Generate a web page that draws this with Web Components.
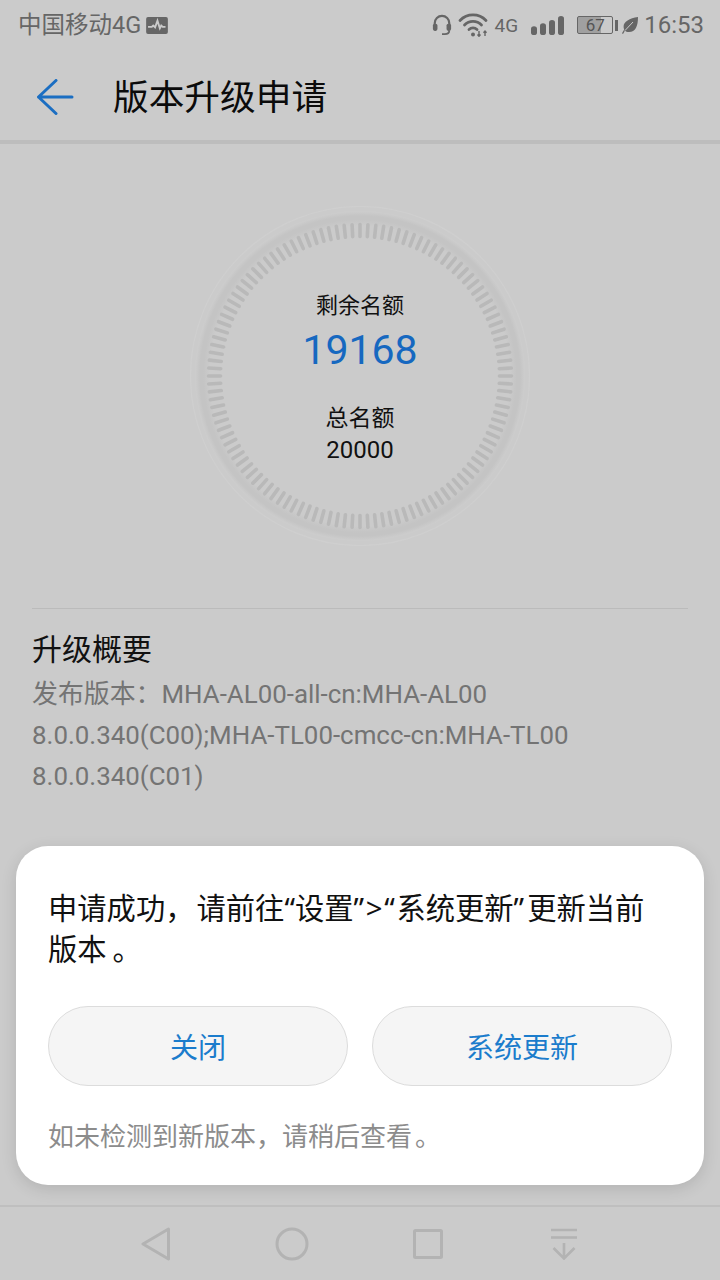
<!DOCTYPE html>
<html lang="zh-CN"><head><meta charset="utf-8"><title>版本升级申请</title>
<style>
html,body{margin:0;padding:0;width:720px;height:1280px;overflow:hidden;background:#cbcbcb;font-family:Roboto,"Noto Sans CJK SC",sans-serif}
body{position:relative;display:flex;flex-direction:column}
</style></head><body>
<x-status-bar></x-status-bar>
<x-app-bar title="版本升级申请"></x-app-bar>
<x-dial remaining="19168" total="20000"></x-dial>
<x-summary heading="升级概要">发布版本：MHA-AL00-all-cn:MHA-AL00<br>8.0.0.340(C00);MHA-TL00-cmcc-cn:MHA-TL00<br>8.0.0.340(C01)</x-summary>
<x-nav-bar></x-nav-bar>
<x-dialog>
  <span slot="message">申请成功<span style="font-family:'Noto Sans CJK TC',sans-serif;padding-right:2px">，</span>请前往“设置<span style="letter-spacing:1.700px">”&gt;“</span>系统更新<span style="letter-spacing:3px">”</span>更新当前<br>版本<span style="margin-left:6px">。</span></span>
  <x-pill slot="actions">关闭</x-pill>
  <x-pill slot="actions">系统更新</x-pill>
  <span slot="note">如未检测到新版本，请稍后查看<span style="margin-left:3px">。</span></span>
</x-dialog>
<script>
const def=(name,html,extra)=>customElements.define(name,class extends HTMLElement{
  constructor(){super();this.attachShadow({mode:'open'}).innerHTML=html;}
  connectedCallback(){if(extra)extra(this,this.shadowRoot);}
});
def('x-status-bar',`<style>
:host{display:flex;align-items:center;height:50px;padding:0 16px 0 18px;color:#666;flex:none;box-sizing:border-box}
.l{font-size:23.500px;line-height:50px;white-space:nowrap}
.g{flex:1}
svg{display:block;flex:none}
.net{font-size:19px;margin:0 13px 0 7px}
.time{font-size:24px;margin-left:6px}
</style>
<span class="l">中国移动4G</span>
<svg width="22" height="17" viewBox="0 0 23 18" style="margin-left:5px"><rect width="23" height="18" rx="2" fill="#666"/><path d="M2 10.500h4l1.500-1.500 2 2 2.500-7 2.500 8 1.500-3 1.500 1.500h3" fill="none" stroke="#cbcbcb" stroke-width="2"/></svg>
<span class="g"></span>
<svg width="20" height="22" viewBox="0 0 22 24" style="margin-right:6px"><path d="M3 15V10a8 8 0 0 1 16 0v5" fill="none" stroke="#666" stroke-width="2.400"/><rect x="1" y="10.500" width="5" height="8" rx="2" fill="#666"/><rect x="16" y="10.500" width="5" height="8" rx="2" fill="#666"/><path d="M19 18c0 3-2 4-5 4h-3" fill="none" stroke="#666" stroke-width="2"/></svg>
<svg width="30" height="24" viewBox="0 0 30 24"><g fill="none" stroke="#666" stroke-width="2.800" stroke-linecap="round"><path d="M2 7.500a18 18 0 0 1 26 0"/><path d="M6.500 12a12 12 0 0 1 17 0"/><path d="M11 16.500a6 6 0 0 1 8 0"/></g><circle cx="15" cy="21.500" r="2" fill="#666"/><path d="M21 18v5M19.500 21.500l1.500 1.800 1.500-1.800M27 23v-5M25.500 19.800l1.500-1.800 1.500 1.800" fill="none" stroke="#666" stroke-width="1.400"/></svg>
<span class="net">4G</span>
<svg width="33" height="19" viewBox="0 0 33 22" preserveAspectRatio="none" style="margin-right:13px;margin-top:1px"><rect y="12" width="6" height="10" rx="3" fill="#666"/><rect x="9" y="8.500" width="6" height="13.500" rx="3" fill="#666"/><rect x="18" y="4.500" width="6" height="17.500" rx="3" fill="#666"/><rect x="27" y="0" width="6" height="22" rx="3" fill="#666"/></svg>
<x-battery>67</x-battery>
<svg width="16" height="17" viewBox="0 0 16 17" style="margin-left:4px"><path d="M16 0C16 9 13.500 15 7 15 5 15 3.800 14.500 3 13.500L1 17 0 16.300 2.200 12.500C-.5 6 6 1.500 16 0z" fill="#666"/><path d="M3 13.500 11 5" stroke="#cbcbcb" stroke-width="1"/></svg>
<span class="time">16:53</span>`);
def('x-battery',`<style>
:host{display:flex;align-items:center;flex:none}
.b{width:36px;height:18px;box-sizing:border-box;border:1px solid #666;border-radius:2px;background:linear-gradient(90deg,#a0a0a0 68%,transparent 68%);font-size:17px;line-height:16px;text-align:center;color:#555}
.t{width:3px;height:11px;background:#666;margin-left:2px}
</style><div class="b"><slot></slot></div><div class="t"></div>`);
def('x-app-bar',`<style>
:host{display:flex;align-items:center;height:94px;box-sizing:border-box;border-bottom:4px solid #bdbdbd;flex:none;padding-left:36px;padding-top:3px}
svg{display:block;margin-right:39px}
h1{margin:0;font-size:35.700px;font-weight:400;color:#0b0b0b;line-height:1;padding-top:5px}
</style><svg width="38" height="36" viewBox="0 0 38 36"><path d="M36 18H2.500M20 1.500 2.500 18 20 34.500" fill="none" stroke="#1b6ec2" stroke-width="3" stroke-linecap="round" stroke-linejoin="round"/></svg><h1></h1>`,
(el,r)=>{r.querySelector('h1').textContent=el.getAttribute('title')});
def('x-dial',`<style>
:host{display:flex;height:464px;align-items:center;justify-content:center;flex:none}
.w{display:grid;width:340px;height:340px}
.w>*{grid-area:1/1}
svg{display:block}
.c{display:flex;flex-direction:column;align-items:center;padding-top:85px;color:#111;box-sizing:border-box}
.a{font-size:22px;line-height:30px}
.n{font-size:41px;line-height:50px;color:#1668c0;margin-top:4px}
.b{margin-top:29px;font-size:23px}
.t{font-size:24px;line-height:30px;margin-top:1px}
</style>
<div class="w"><svg width="340" height="340" viewBox="-170 -170 340 340">
<defs><radialGradient id="g" gradientUnits="userSpaceOnUse" cx="0" cy="0" r="165"><stop offset=".91" stop-color="#cbcbcb"/><stop offset=".95" stop-color="#c4c4c4"/><stop offset=".97" stop-color="#c4c4c4"/><stop offset="1" stop-color="#cdcdcd"/></radialGradient></defs>
<circle r="169.500" fill="none" stroke="#cfcfcf" stroke-width="1.200"/>
<circle r="165" fill="url(#g)"/>
<g id="ticks" stroke="#b9b9b9" stroke-width="3.600" stroke-linecap="round"></g></svg>
<div class="c"><span class="a">剩余名额</span><span class="n"></span><span class="a b">总名额</span><span class="t"></span></div></div>`,
(el,r)=>{r.querySelector('.n').textContent=el.getAttribute('remaining');r.querySelector('.t').textContent=el.getAttribute('total');
let s='';for(let i=0;i<120;i++){const a=i*Math.PI/60,c=Math.cos(a),n=Math.sin(a);s+=`<line x1="${(139.5*c).toFixed(2)}" y1="${(139.5*n).toFixed(2)}" x2="${(151.5*c).toFixed(2)}" y2="${(151.5*n).toFixed(2)}"/>`}
r.querySelector('#ticks').innerHTML=s});
def('x-summary',`<style>
:host{display:block;margin:0 32px;border-top:1px solid #bbb;padding-top:21px;flex:none}
h2{margin:0 0 4px;font-size:30px;font-weight:400;line-height:40px;color:#111}
p{margin:0;font-size:25.900px;line-height:41px;color:#747474}
</style><h2></h2><p><slot></slot></p>`,(el,r)=>{r.querySelector('h2').textContent=el.getAttribute('heading')});
def('x-nav-bar',`<style>
:host{display:flex;align-items:center;justify-content:center;gap:0;height:75px;margin-top:auto;box-sizing:border-box;border-top:2px solid #bfbfbf;flex:none}
.i{width:136px;display:flex;justify-content:center}
svg{display:block}
</style>
<div class="i"><svg width="30" height="34" viewBox="0 0 30 34"><path d="M27.500 2 2 17l25.500 15z" fill="none" stroke="#b3b3b3" stroke-width="3" stroke-linejoin="round"/></svg></div>
<div class="i"><svg width="34" height="34" viewBox="0 0 34 34"><circle cx="17" cy="17" r="15" fill="none" stroke="#b3b3b3" stroke-width="3"/></svg></div>
<div class="i"><svg width="30" height="30" viewBox="0 0 30 30"><rect x="1.500" y="1.500" width="27" height="27" rx="1" fill="none" stroke="#b3b3b3" stroke-width="3"/></svg></div>
<div class="i"><svg width="28" height="32" viewBox="0 0 28 32"><path d="M1 2h26M1 9.500h26M14 15v15M3.500 20l10.500 10.500 10.500-10.500" fill="none" stroke="#b3b3b3" stroke-width="2.600"/></svg></div>`);
def('x-dialog',`<style>
:host{position:absolute;left:16px;top:846px;width:688px;height:339px;box-sizing:border-box;padding:40px 32px 0;background:#fff;border-radius:32px;box-shadow:0 4px 16px rgba(0,0,0,.12);display:flex;flex-direction:column}
.m{font-family:"Noto Sans","Noto Sans CJK SC",sans-serif;font-size:29.300px;line-height:41px;color:#111;height:82px;white-space:nowrap}
.a{display:flex;gap:24px;margin-top:38px}
.n{font-size:26px;line-height:36px;color:#8c8c8c;margin-top:33px}
</style><div class="m"><slot name="message"></slot></div><div class="a"><slot name="actions"></slot></div><div class="n"><slot name="note"></slot></div>`);
def('x-pill',`<style>
:host{display:flex;flex:1;height:80px;align-items:center;justify-content:center;box-sizing:border-box;border:1px solid #dcdcdc;border-radius:40px;background:#f5f5f5;color:#1b7ccc;font-size:28px}
</style><slot></slot>`);
</script></body></html>
